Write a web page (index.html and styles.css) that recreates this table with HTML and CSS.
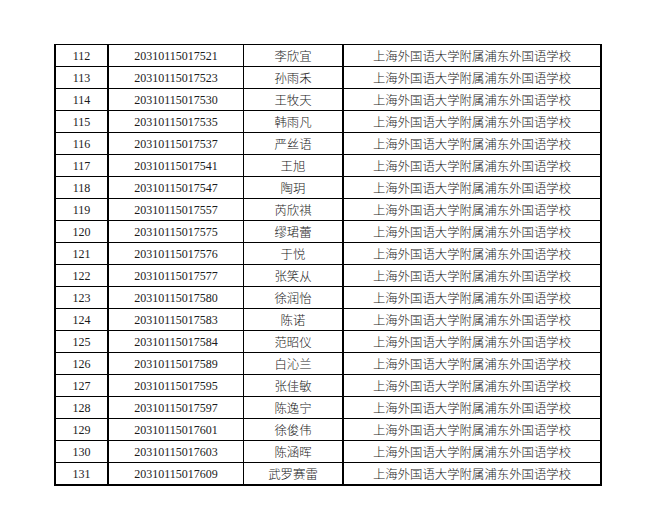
FILE: index.html
```html
<!DOCTYPE html>
<html lang="zh-CN">
<head>
<meta charset="utf-8">
<title>名单</title>
<link rel="stylesheet" href="styles.css">
</head>
<body>
<div class="page">
<table class="list">
<colgroup><col class="c-no"><col class="c-id"><col class="c-name"><col class="c-school"></colgroup>
<tbody>
<tr><td class="no">112</td><td class="id">20310115017521</td><td class="name">李欣宜</td><td class="school">上海外国语大学附属浦东外国语学校</td></tr>
<tr><td class="no">113</td><td class="id">20310115017523</td><td class="name">孙雨禾</td><td class="school">上海外国语大学附属浦东外国语学校</td></tr>
<tr><td class="no">114</td><td class="id">20310115017530</td><td class="name">王牧天</td><td class="school">上海外国语大学附属浦东外国语学校</td></tr>
<tr><td class="no">115</td><td class="id">20310115017535</td><td class="name">韩雨凡</td><td class="school">上海外国语大学附属浦东外国语学校</td></tr>
<tr><td class="no">116</td><td class="id">20310115017537</td><td class="name">严丝语</td><td class="school">上海外国语大学附属浦东外国语学校</td></tr>
<tr><td class="no">117</td><td class="id">20310115017541</td><td class="name">王旭</td><td class="school">上海外国语大学附属浦东外国语学校</td></tr>
<tr><td class="no">118</td><td class="id">20310115017547</td><td class="name">陶玥</td><td class="school">上海外国语大学附属浦东外国语学校</td></tr>
<tr><td class="no">119</td><td class="id">20310115017557</td><td class="name">芮欣祺</td><td class="school">上海外国语大学附属浦东外国语学校</td></tr>
<tr><td class="no">120</td><td class="id">20310115017575</td><td class="name">缪珺蕾</td><td class="school">上海外国语大学附属浦东外国语学校</td></tr>
<tr><td class="no">121</td><td class="id">20310115017576</td><td class="name">于悦</td><td class="school">上海外国语大学附属浦东外国语学校</td></tr>
<tr><td class="no">122</td><td class="id">20310115017577</td><td class="name">张笑从</td><td class="school">上海外国语大学附属浦东外国语学校</td></tr>
<tr><td class="no">123</td><td class="id">20310115017580</td><td class="name">徐润怡</td><td class="school">上海外国语大学附属浦东外国语学校</td></tr>
<tr><td class="no">124</td><td class="id">20310115017583</td><td class="name">陈诺</td><td class="school">上海外国语大学附属浦东外国语学校</td></tr>
<tr><td class="no">125</td><td class="id">20310115017584</td><td class="name">范昭仪</td><td class="school">上海外国语大学附属浦东外国语学校</td></tr>
<tr><td class="no">126</td><td class="id">20310115017589</td><td class="name">白沁兰</td><td class="school">上海外国语大学附属浦东外国语学校</td></tr>
<tr><td class="no">127</td><td class="id">20310115017595</td><td class="name">张佳敏</td><td class="school">上海外国语大学附属浦东外国语学校</td></tr>
<tr><td class="no">128</td><td class="id">20310115017597</td><td class="name">陈逸宁</td><td class="school">上海外国语大学附属浦东外国语学校</td></tr>
<tr><td class="no">129</td><td class="id">20310115017601</td><td class="name">徐俊伟</td><td class="school">上海外国语大学附属浦东外国语学校</td></tr>
<tr><td class="no">130</td><td class="id">20310115017603</td><td class="name">陈涵晖</td><td class="school">上海外国语大学附属浦东外国语学校</td></tr>
<tr><td class="no">131</td><td class="id">20310115017609</td><td class="name">武罗赛雷</td><td class="school">上海外国语大学附属浦东外国语学校</td></tr>
</tbody>
</table>
</div>
</body>
</html>
```

FILE: styles.css
```css
html, body {
  margin: 0;
  padding: 0;
  background: #ffffff;
}

.page {
  padding: 44px 0 0 54px;
}

.list {
  border-collapse: separate;
  border-spacing: 0;
  table-layout: fixed;
  width: 548px;
  border-left: 2px solid #000;
  border-top: 1px solid #000;
  color: #1b1b1b;
}

.c-no { width: 53px; }
.c-id { width: 135px; }
.c-name { width: 100px; }
.c-school { width: 258px; }

.list td {
  box-sizing: border-box;
  height: 22px;
  padding: 0;
  text-align: center;
  vertical-align: middle;
  border-bottom: 1px solid #000;
  white-space: nowrap;
  line-height: 20px;
}

.list tr:last-child td {
  border-bottom-width: 2px;
  height: 23px;
}

.no, .id {
  font-family: "Liberation Serif", "Times New Roman", serif;
  font-size: 12px;
}

.name, .school {
  font-family: "Noto Sans CJK SC", "Liberation Sans", sans-serif;
  font-size: 12.4px;
  font-weight: 300;
}

.no { border-right: 2px solid #000; }
.id { border-right: 1px solid #000; }
.name { border-right: 2px solid #000; }
.school { border-right: 2px solid #000; }
```
